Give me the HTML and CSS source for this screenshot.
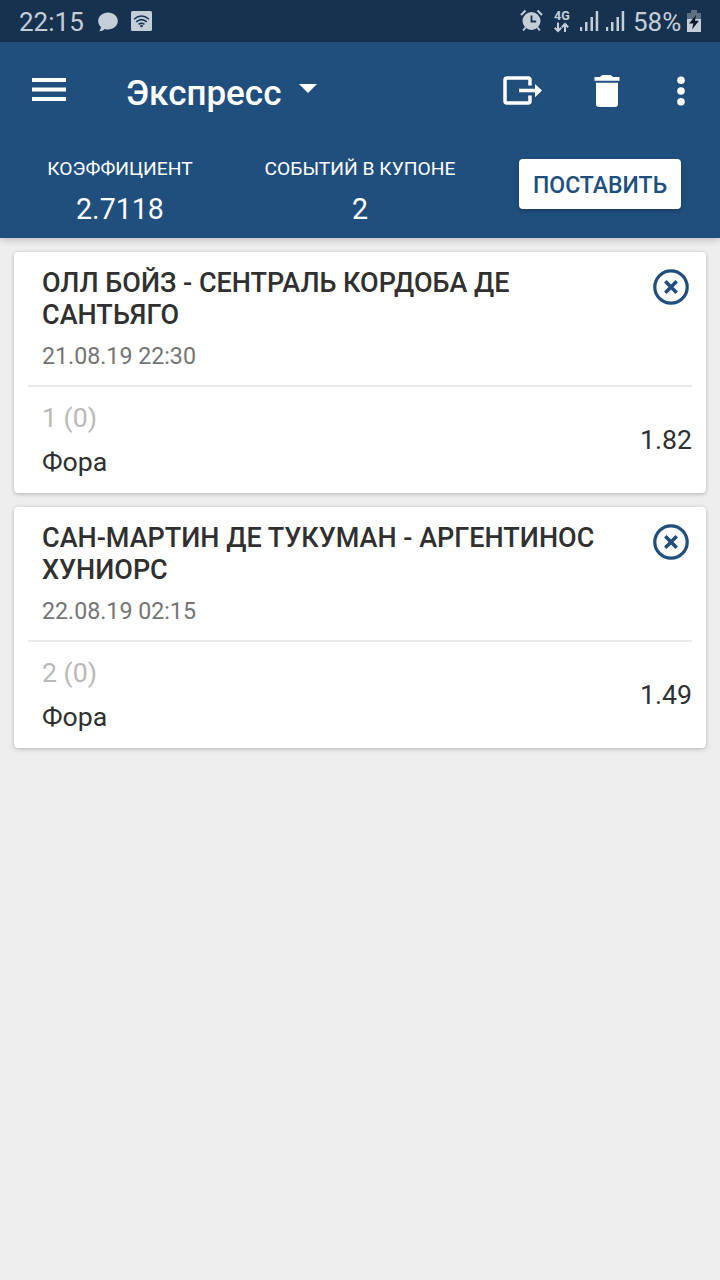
FILE: index.html
```html
<!DOCTYPE html>
<html lang="ru">
<head>
<meta charset="utf-8">
<title>Экспресс</title>
<link rel="stylesheet" href="styles.css">
</head>
<body>
<div class="status">
  <span class="clock">22:15</span>
  <svg class="chat" width="20" height="20" viewBox="0 0 20 20"><path d="M10 .5c5.500 0 9.800 3.700 9.800 8.500s-4.300 8.500-9.800 8.500c-1.200 0-2.300-.1-3.300-.5C5.300 18.400 3.400 19.200 1 19.300c1.300-1.300 1.900-2.600 1.900-4.300C1.200 13.500.2 11.400.2 9 .2 4.200 4.500.5 10 .5z" fill="currentColor"/></svg>
  <svg class="wifi" width="21" height="20" viewBox="0 0 21 20"><rect width="21" height="20" rx="1.500" fill="currentColor"/><g fill="none" stroke="#17324f" stroke-width="1.500"><path d="M3 8.200q7.500-6.400 15 0M5.200 10.900q5.300-4.600 10.600 0M7.600 13.400q2.900-2.400 5.800 0"/></g><circle cx="10.500" cy="15" r="1.300" fill="#17324f"/></svg>
  <span class="grow"></span>
  <svg class="alarm" width="23" height="23" viewBox="0 0 23 23"><circle cx="11.500" cy="12" r="9" fill="currentColor"/><path d="M1 6L5.500 1.500M17.500 1.500L22 6M5.500 18.500L3.200 21.500M17.500 18.500L19.800 21.500" stroke="currentColor" stroke-width="2"/><path d="M11.500 6.500v6h4.700" fill="none" stroke="#17324f" stroke-width="1.800"/></svg>
  <div class="net"><span class="gen">4G</span>
    <svg width="15" height="11" viewBox="0 0 15 11"><path d="M4 .5v8M.8 5.700L4 9l3.200-3.300M11 10V2M7.800 5.300L11 2l3.200 3.300" fill="none" stroke="currentColor" stroke-width="2"/></svg>
  </div>
  <svg class="bars" width="19" height="21" viewBox="0 0 19 21"><path d="M0 16h2.200v4H0zM5 11h2.500v9H5zM10.500 6H13v14h-2.500zM15.700 0h2.500v20h-2.500z" fill="currentColor"/></svg>
  <svg class="bars two" width="19" height="21" viewBox="0 0 19 21"><path d="M0 16h2.200v4H0zM5 11h2.500v9H5zM10.500 6H13v14h-2.500zM15.700 0h2.500v20h-2.500z" fill="currentColor"/></svg>
  <span class="charge">58%</span>
  <svg class="battery" width="14" height="22" viewBox="0 0 14 22"><path d="M4 0h6v3h4v6H0V3h4z" fill="#5e7083"/><path d="M0 9h14v13H0z" fill="currentColor"/><path d="M9 5L2 13.500h4.300L5 19.500l7-8.700H8z" fill="#0c1b2b"/></svg>
</div>
<header class="header">
  <div class="toolbar">
    <svg class="menu" width="34" height="24" viewBox="0 0 34 24"><path d="M0 2h34M0 11.500h34M0 21h34" stroke="#fff" stroke-width="4"/></svg>
    <h1 class="title">Экспресс</h1>
    <svg class="caret" width="18" height="9" viewBox="0 0 18 9"><path d="M0 0h18L9 9z" fill="#fff"/></svg>
    <span class="grow"></span>
    <svg class="exit" width="40" height="30" viewBox="0 0 40 30"><path d="M27 9.500V4q0-2-2-2H4Q2 2 2 4v21q0 2 2 2h21q2 0 2-2v-5.500" fill="none" stroke="#fff" stroke-width="3.500"/><path d="M16 12.800h16V8l7 6.600-7 6.600v-4.900H16z" fill="#fff"/></svg>
    <svg class="trash" width="26" height="32" viewBox="0 0 26 32"><path d="M.5 2H6l2.200-2h8.600L19 2h6.500v3.700H.5zM2 7.700h22v21q0 3.300-3.300 3.300H5.300Q2 32 2 28.700z" fill="#fff"/></svg>
    <svg class="more" width="8" height="30" viewBox="0 0 8 30"><g fill="#fff"><circle cx="4" cy="4.300" r="3.800"/><circle cx="4" cy="15" r="3.800"/><circle cx="4" cy="25.700" r="3.800"/></g></svg>
  </div>
  <div class="summary">
    <div class="stat"><span class="label">КОЭФФИЦИЕНТ</span><span class="value">2.7118</span></div>
    <div class="stat"><span class="label">СОБЫТИЙ В КУПОНЕ</span><span class="value">2</span></div>
    <div class="action"><button class="place">ПОСТАВИТЬ</button></div>
  </div>
</header>
<main class="list">
  <article class="card">
    <div class="top">
      <div class="event"><h2 class="name">ОЛЛ БОЙЗ - СЕНТРАЛЬ КОРДОБА ДЕ САНТЬЯГО</h2><div class="date">21.08.19 22:30</div></div>
      <svg class="remove" width="36" height="36" viewBox="0 0 36 36"><g fill="none" stroke="#204f7e"><circle cx="18" cy="18" r="16.200" stroke-width="3.200"/><path d="M12.300 12.300l11.400 11.400M23.700 12.300L12.300 23.700" stroke-width="3.600"/></g></svg>
    </div>
    <div class="bottom">
      <div class="bet"><div class="pick">1 (0)</div><div class="market">Фора</div></div>
      <div class="odds">1.82</div>
    </div>
  </article>
  <article class="card">
    <div class="top">
      <div class="event"><h2 class="name">САН-МАРТИН ДЕ ТУКУМАН - АРГЕНТИНОС ХУНИОРС</h2><div class="date">22.08.19 02:15</div></div>
      <svg class="remove" width="36" height="36" viewBox="0 0 36 36"><g fill="none" stroke="#204f7e"><circle cx="18" cy="18" r="16.200" stroke-width="3.200"/><path d="M12.300 12.300l11.400 11.400M23.700 12.300L12.300 23.700" stroke-width="3.600"/></g></svg>
    </div>
    <div class="bottom">
      <div class="bet"><div class="pick">2 (0)</div><div class="market">Фора</div></div>
      <div class="odds">1.49</div>
    </div>
  </article>
</main>
</body>
</html>
```
FILE: styles.css
```css
* { box-sizing: border-box; }
body { margin: 0; min-height: 1280px; background: #eee; font-family: Roboto, "Noto Sans", sans-serif; color: #303030; }
svg { display: block; flex: none; }
h1, h2 { margin: 0; font-weight: 500; }
.grow { flex: 1; }
.status { display: flex; align-items: flex-start; height: 42px; padding: 0 19px; background: #17324f; color: #c3ced9; }
.clock, .charge { font-size: 26px; line-height: 44px; white-space: nowrap; }
.clock { width: 65px; }
.chat { margin: 12px 0 0 14px; }
.wifi { margin: 11px 0 0 13px; }
.alarm { margin: 9px 11px 0 0; }
.net { width: 16px; margin: 9px 10px 0 0; }
.gen { display: block; font-size: 12.5px; line-height: 13px; font-weight: 700; }
.bars { margin-top: 11px; }
.two { margin: 11px 8px 0 7px; }
.charge { width: 48px; }
.battery { margin: 10px 0 0 6px; }
.header { height: 196px; background: #204f7e; color: #fff; position: relative; box-shadow: 0 2px 7px rgba(0,0,0,.2); }
.toolbar { display: flex; align-items: center; height: 98px; padding: 0 35px 0 32px; }
.menu { margin-top: -3px; }
.title { margin: 6px 0 0 60px; font-size: 35px; line-height: 42px; }
.caret { margin: -6px 0 0 18px; }
.exit { margin: 0 51px 0 0; }
.trash { margin-right: 57px; }
.summary { display: flex; height: 98px; padding-top: 16px; }
.stat { width: 240px; display: flex; flex-direction: column; align-items: center; padding-top: 1px; }
.label { font-size: 19.25px; line-height: 24px; }
.value { font-size: 28.6px; line-height: 36px; margin-top: 10px; }
.action { width: 240px; display: flex; justify-content: center; padding-top: 3px; }
.place { width: 162px; height: 50px; padding: 2px 0 0; border: 0; border-radius: 4px; background: #fff; color: #204f7e; font: 500 23px Roboto, sans-serif; box-shadow: 0 2px 4px rgba(0,0,0,.25); }
.list { display: flex; flex-direction: column; gap: 14px; padding: 14px; }
.card { height: 241px; padding: 0 14px; border-radius: 4px; background: #fff; box-shadow: 0 1px 4px rgba(0,0,0,.25); }
.top { display: flex; justify-content: space-between; height: 135px; padding: 15px 3px 0 14px; border-bottom: 2px solid #ebebeb; }
.event { width: 570px; }
.name { font-size: 27px; line-height: 32px; }
.date { margin-top: 11px; font-size: 23.2px; line-height: 28px; color: #757575; }
.remove { margin-top: 2px; }
.bottom { display: flex; justify-content: space-between; align-items: center; height: 106px; padding-left: 14px; }
.pick { font-size: 26.7px; line-height: 32px; color: #b9b9b9; }
.market { margin-top: 12px; font-size: 26.7px; line-height: 32px; }
.odds { font-size: 26.7px; line-height: 32px; }
```
